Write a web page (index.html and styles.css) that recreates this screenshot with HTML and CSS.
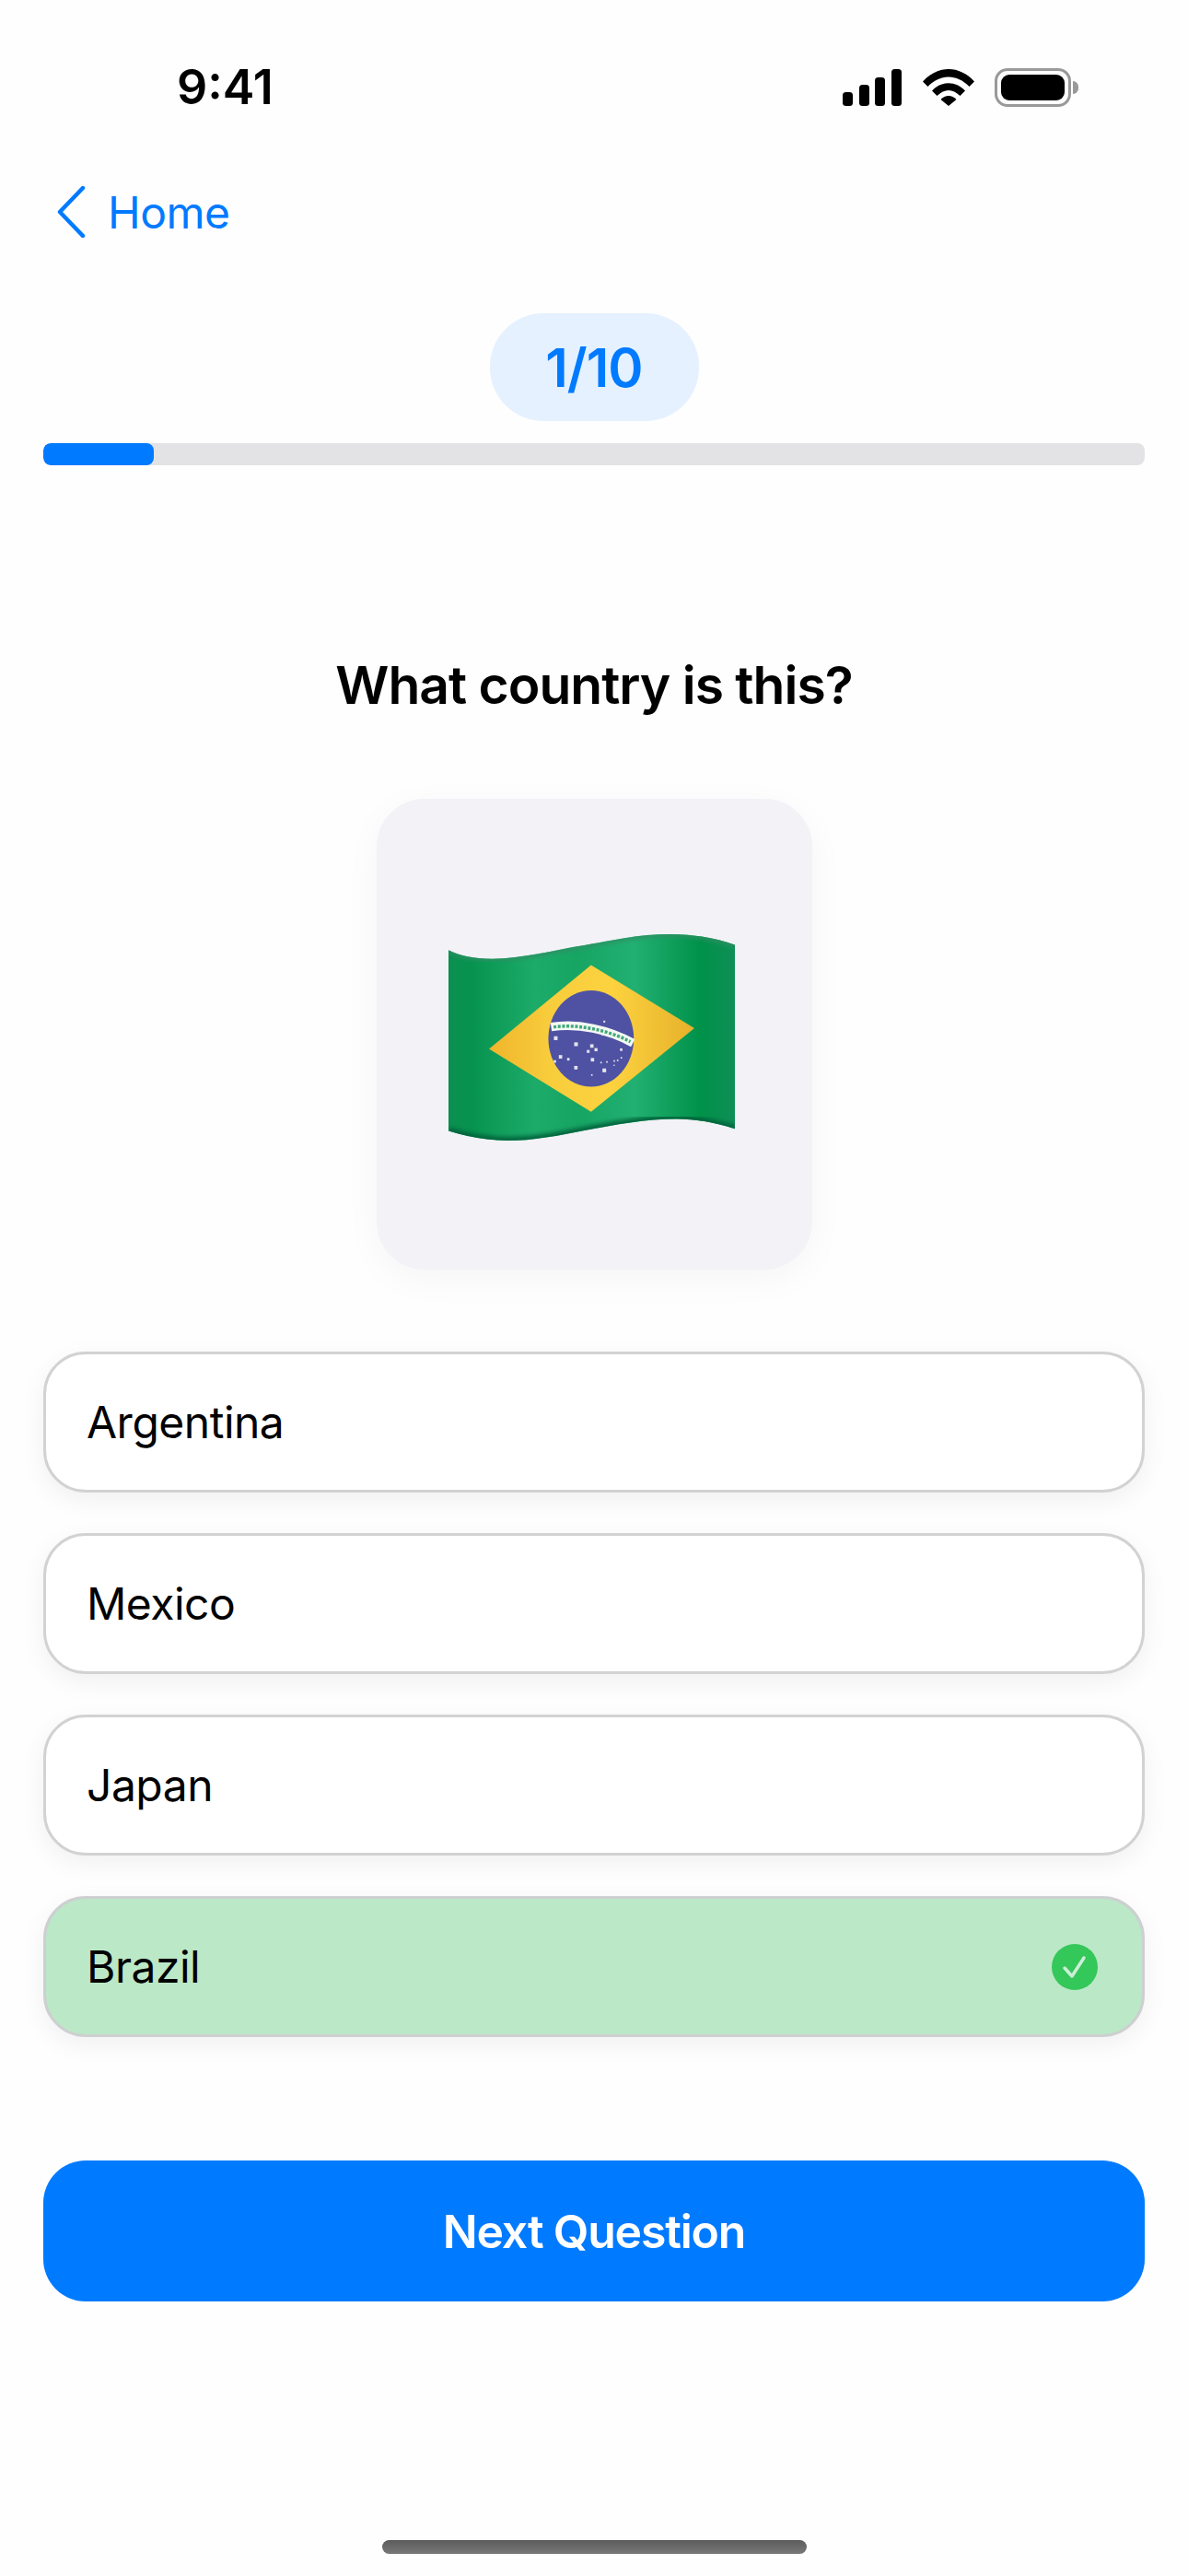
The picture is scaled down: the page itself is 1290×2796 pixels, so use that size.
FILE: index.html
```html
<!DOCTYPE html>
<html lang="en">
<head>
    <meta charset="UTF-8">
    <meta name="viewport" content="width=device-width, initial-scale=1.0">
    <title>Flag Quiz</title>
    <link rel="stylesheet" href="styles.css">
</head>
<body>
    <div class="status-bar">
        <span class="time">9:41</span>
        <div class="status-icons">
            <svg class="signal" viewBox="0 0 64 40" width="64" height="40">
                <rect x="0" y="25" width="11" height="15" rx="3.5"/>
                <rect x="18" y="17" width="11" height="23" rx="3.5"/>
                <rect x="35" y="9" width="11" height="31" rx="3.5"/>
                <rect x="53" y="0" width="11" height="40" rx="3.5"/>
            </svg>
            <svg class="wifi" viewBox="0 0 56 40" width="56" height="40">
                <path d="M0 13.500C16 -4.500 40 -4.500 56 13.500L50.500 19C37 5 19 5 5.500 19Z"/>
                <path d="M10 23.500C20 12.500 36 12.500 46 23.500L40.500 29C32 21 24 21 15.500 29Z"/>
                <path d="M19.500 33C24.500 27.500 31.500 27.500 36.500 33L28 40Z"/>
            </svg>
            <div class="battery">
                <div class="battery-body"><div class="battery-fill"></div></div>
                <div class="battery-nub"></div>
            </div>
        </div>
    </div>

    <div class="nav">
        <svg class="chevron" viewBox="0 0 32 56" width="32" height="56">
            <path d="M29 2L4 28L29 54" fill="none" stroke="#007aff" stroke-width="4.500" stroke-linecap="round" stroke-linejoin="round"/>
        </svg>
        <span class="nav-label">Home</span>
    </div>

    <div class="counter-row"><div class="counter">1/10</div></div>
    <div class="progress"><div class="progress-fill"></div></div>

    <h1 class="question">What country is this?</h1>

    <div class="flag-card">
        <svg class="flag" viewBox="258 445 932 650" width="311" height="225" preserveAspectRatio="none">
            <defs>
                <linearGradient id="green" x1="0" x2="1" y1="0" y2="0">
                    <stop offset="0" stop-color="#0b8f50"/>
                    <stop offset="0.08" stop-color="#06934f"/>
                    <stop offset="0.3" stop-color="#1dab6a"/>
                    <stop offset="0.45" stop-color="#16a563"/>
                    <stop offset="0.65" stop-color="#22b072"/>
                    <stop offset="0.88" stop-color="#009149"/>
                    <stop offset="1" stop-color="#0f8f56"/>
                </linearGradient>
                <linearGradient id="yellow" x1="0" x2="1" y1="0" y2="0">
                    <stop offset="0" stop-color="#efb52c"/>
                    <stop offset="0.3" stop-color="#f8cd3c"/>
                    <stop offset="0.6" stop-color="#fcd23f"/>
                    <stop offset="1" stop-color="#e6b12b"/>
                </linearGradient>
                <clipPath id="flag-shape">
                    <path d="M258 495C290 510 330 522 400 522C500 522 600 495 700 480C800 462 880 445 980 445C1060 445 1130 458 1190 478L1190 1055C1130 1038 1070 1024 1000 1024C900 1024 800 1042 700 1060C620 1076 530 1092 450 1092C380 1092 320 1080 258 1062Z"/>
                </clipPath>
                <filter id="soft"><feGaussianBlur stdDeviation="8"/></filter>
            </defs>
            <g clip-path="url(#flag-shape)">
                <rect x="258" y="445" width="932" height="650" fill="url(#green)"/>
                <path d="M258 495C290 510 330 522 400 522C500 522 600 495 700 480C800 462 880 445 980 445C1060 445 1130 458 1190 478" fill="none" stroke="#2f8f63" stroke-width="16" filter="url(#soft)"/>
                <path d="M1190 1055C1130 1038 1070 1024 1000 1024C900 1024 800 1042 700 1060C620 1076 530 1092 450 1092C380 1092 320 1080 258 1062" fill="none" stroke="#04613a" stroke-width="22" filter="url(#soft)"/>
                <path d="M258 495L258 1062" stroke="#0b6e42" stroke-width="20" filter="url(#soft)"/>
                <path d="M1190 478L1190 1055" stroke="#0b6e42" stroke-width="18" filter="url(#soft)"/>
            </g>
            <path d="M722 542L1058 740L722 1002L390 805Z" fill="url(#yellow)"/>
            <ellipse cx="722" cy="772" rx="139" ry="151" fill="#4f52a2"/>
            <path d="M592 736C680 722 780 745 858 786" fill="none" stroke="#f4f8f4" stroke-width="27"/>
            <path d="M600 736C680 726 775 745 850 782" fill="none" stroke="#41a878" stroke-width="10" stroke-dasharray="9 5"/>
            <g fill="#e4e4f0">
                <rect x="601" y="765" width="12" height="12"/>
                <rect x="667" y="784" width="12" height="12"/>
                <rect x="719" y="790" width="11" height="11"/>
                <rect x="733" y="802" width="10" height="10"/>
                <rect x="708" y="808" width="9" height="9"/>
                <rect x="721" y="833" width="11" height="11"/>
                <rect x="617" y="824" width="11" height="11"/>
                <rect x="644" y="833" width="8" height="8"/>
                <rect x="600" y="840" width="8" height="8"/>
                <rect x="667" y="858" width="11" height="11"/>
                <rect x="759" y="866" width="12" height="12"/>
                <rect x="816" y="803" width="8" height="8"/>
                <rect x="752" y="845" width="5" height="5"/>
                <rect x="771" y="843" width="5" height="5"/>
                <rect x="795" y="840" width="5" height="5"/>
                <rect x="806" y="838" width="5" height="5"/>
                <rect x="818" y="830" width="5" height="5"/>
                <rect x="795" y="854" width="4" height="4"/>
                <rect x="722" y="884" width="5" height="5"/>
                <rect x="762" y="716" width="6" height="6"/>
                <rect x="756" y="757" width="6" height="6"/>
            </g>
        </svg>
    </div>

    <div class="options">
        <div class="option">Argentina</div>
        <div class="option">Mexico</div>
        <div class="option">Japan</div>
        <div class="option option-correct">
            Brazil
            <svg class="check" viewBox="0 0 50 50" width="50" height="50">
                <circle cx="25" cy="25" r="25" fill="#34c759"/>
                <path d="M14 26L22 35L35 15" fill="none" stroke="#cdeed6" stroke-width="3.500" stroke-linecap="round" stroke-linejoin="round"/>
            </svg>
        </div>
    </div>

    <button class="next-button">Next Question</button>

    <div class="home-indicator"></div>
</body>
</html>
```

FILE: styles.css
```css
* {
    box-sizing: border-box;
    font-family: Inter, "Liberation Sans", sans-serif;
}
html, body {
    margin: 0;
    height: 2796px;
    overflow: hidden;
}
body {
    background-color: #fefefe;
    color: #000;
    padding: 0 47px;
}

.status-bar {
    display: flex;
    justify-content: space-between;
    align-items: center;
    height: 50px;
    margin-top: 70px;
    padding-left: 145px;
    padding-right: 72px;
}
.time {
    font-size: 52px;
    font-weight: 600;
    line-height: 50px;
}
.status-icons {
    display: flex;
    align-items: center;
    gap: 22px;
}
.wifi {
    margin-left: 1px;
}
.battery {
    display: flex;
    align-items: center;
}
.battery-body {
    width: 83px;
    height: 42px;
    border: 3px solid #999;
    border-radius: 14px;
    padding: 4px;
}
.battery-fill {
    width: 100%;
    height: 100%;
    background-color: #000;
    border-radius: 9px;
}
.battery-nub {
    width: 6px;
    height: 14px;
    margin-left: 2px;
    background-color: #999;
    border-radius: 0 7px 7px 0;
}

.nav {
    display: flex;
    align-items: center;
    height: 60px;
    margin-top: 80px;
    padding-left: 14px;
    gap: 24px;
}
.chevron {
    flex: none;
}
.nav-label {
    color: #007aff;
    font-size: 48px;
    letter-spacing: -0.5px;
}

.counter-row {
    display: flex;
    justify-content: center;
    margin-top: 80px;
}
.counter {
    display: flex;
    align-items: center;
    justify-content: center;
    width: 227px;
    height: 117px;
    background-color: #e5f1ff;
    border-radius: 58px;
    color: #007aff;
    font-size: 58px;
    font-weight: 600;
    letter-spacing: -1px;
}

.progress {
    height: 24px;
    margin-top: 24px;
    background-color: #e3e3e5;
    border-radius: 8px;
    overflow: hidden;
}
.progress-fill {
    width: 120px;
    height: 100%;
    background-color: #007aff;
    border-radius: 8px;
}

.question {
    margin: 204px 0 0;
    text-align: center;
    font-size: 57px;
    line-height: 70px;
    font-weight: 600;
    letter-spacing: -1px;
}

.flag-card {
    display: flex;
    align-items: center;
    justify-content: center;
    width: 473px;
    height: 511px;
    margin: 88px auto 0;
    padding: 7px 6px 0 0;
    background-color: #f2f2f7;
    border-radius: 52px;
    box-shadow: 0 10px 40px rgba(0, 0, 0, 0.04);
}

.options {
    display: flex;
    flex-direction: column;
    gap: 44px;
    margin-top: 89px;
}
.option {
    display: flex;
    align-items: center;
    justify-content: space-between;
    height: 153px;
    padding: 0 48px 0 44px;
    background-color: #fff;
    border: 3px solid #d2d2d2;
    border-radius: 46px;
    box-shadow: 0 8px 28px rgba(0, 0, 0, 0.06);
    font-size: 48px;
    letter-spacing: -0.5px;
}
.option-correct {
    background-color: #bbe8c7;
    border-color: #cdcfd0;
}
.check {
    flex: none;
}

.next-button {
    display: block;
    width: 100%;
    height: 153px;
    margin-top: 134px;
    background-color: #007aff;
    color: #fff;
    border: 0;
    border-radius: 46px;
    font-size: 50px;
    font-weight: 600;
    letter-spacing: -1.2px;
}

.home-indicator {
    width: 461px;
    height: 15px;
    margin: 259px auto 0;
    background: linear-gradient(#5c5c5c, #787878);
    border-radius: 8px;
}
```
